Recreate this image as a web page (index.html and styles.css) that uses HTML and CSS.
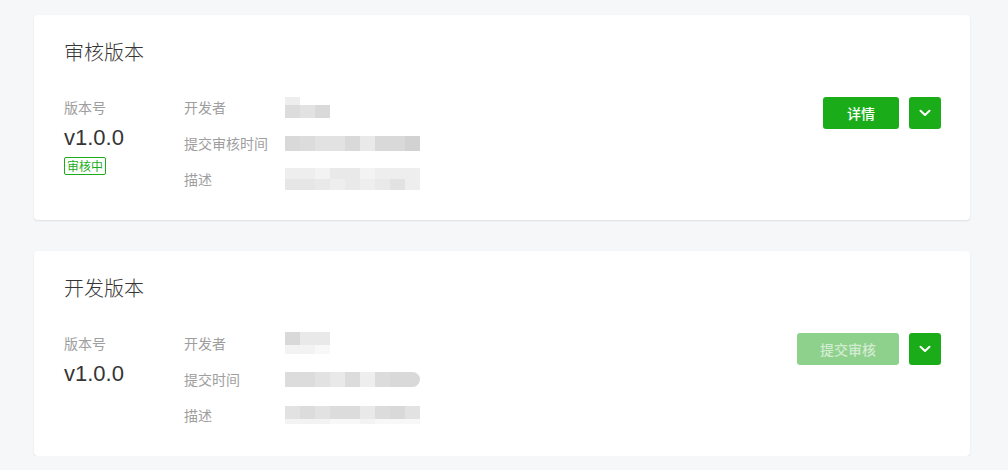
FILE: index.html
```html
<!DOCTYPE html>
<html lang="zh-CN">
<head>
<meta charset="utf-8">
<title>版本管理</title>
<link rel="stylesheet" href="styles.css">
</head>
<body>
<main class="page">
  <section class="card">
    <h2 class="card-title">审核版本</h2>
    <div class="card-body">
      <div class="ver-col">
        <div class="label">版本号</div>
        <div class="ver">v1.0.0</div>
        <span class="tag">审核中</span>
      </div>
      <div class="info">
        <div class="row">
          <span class="label row-label">开发者</span>
          <div class="mosaic">
            <div class="mrow h8"><i class="s7"></i></div>
            <div class="mrow h13"><i class="s3"></i><i class="s4"></i><i class="s2"></i></div>
          </div>
        </div>
        <div class="row">
          <span class="label row-label">提交审核时间</span>
          <div class="mosaic">
            <div class="mrow h15"><i class="s2"></i><i class="s3"></i><i class="s4"></i><i class="s4"></i><i class="s2"></i><i class="s6"></i><i class="s2"></i><i class="s2"></i><i class="s1"></i></div>
          </div>
        </div>
        <div class="row">
          <span class="label row-label">描述</span>
          <div class="mosaic">
            <div class="mrow h11"><i class="s7"></i><i class="s7"></i><i class="s8"></i><i class="s6"></i><i class="s6"></i><i class="s8"></i><i class="s7"></i><i class="s7"></i><i class="s7"></i></div>
            <div class="mrow h11"><i class="s5"></i><i class="s5"></i><i class="s6"></i><i class="s7"></i><i class="s6"></i><i class="s7"></i><i class="s6"></i><i class="s4"></i><i class="s7"></i></div>
          </div>
        </div>
      </div>
      <div class="actions">
        <button class="btn btn-primary" type="button">详情</button>
        <button class="btn btn-icon" type="button" aria-label="更多">
          <svg width="12" height="8" viewBox="0 0 12 8"><path d="M1.5 1.8 6 6 10.5 1.8" fill="none" stroke="#fff" stroke-width="2" stroke-linecap="round" stroke-linejoin="round"/></svg>
        </button>
      </div>
    </div>
  </section>

  <section class="card">
    <h2 class="card-title">开发版本</h2>
    <div class="card-body">
      <div class="ver-col">
        <div class="label">版本号</div>
        <div class="ver">v1.0.0</div>
      </div>
      <div class="info">
        <div class="row">
          <span class="label row-label">开发者</span>
          <div class="mosaic">
            <div class="mrow h13"><i class="s2"></i><i class="s6"></i><i class="s6"></i></div>
            <div class="mrow h9"><i class="s8"></i><i class="s8"></i><i class="s9"></i></div>
          </div>
        </div>
        <div class="row">
          <span class="label row-label">提交时间</span>
          <div class="mosaic round-r">
            <div class="mrow h15"><i class="s3"></i><i class="s3"></i><i class="s4"></i><i class="s6"></i><i class="s3"></i><i class="s7"></i><i class="s3"></i><i class="s2"></i><i class="s2"></i></div>
          </div>
        </div>
        <div class="row">
          <span class="label row-label">描述</span>
          <div class="mosaic">
            <div class="mrow h13"><i class="s4"></i><i class="s3"></i><i class="s4"></i><i class="s3"></i><i class="s3"></i><i class="s6"></i><i class="s3"></i><i class="s2"></i><i class="s4"></i></div>
            <div class="mrow h5"><i class="s8"></i><i class="s8"></i><i class="s8"></i><i class="s9"></i><i class="s9"></i><i class="s8"></i><i class="s9"></i><i class="s9"></i><i class="s9"></i></div>
          </div>
        </div>
      </div>
      <div class="actions">
        <button class="btn btn-primary btn-disabled" type="button" disabled>提交审核</button>
        <button class="btn btn-icon" type="button" aria-label="更多">
          <svg width="12" height="8" viewBox="0 0 12 8"><path d="M1.5 1.8 6 6 10.5 1.8" fill="none" stroke="#fff" stroke-width="2" stroke-linecap="round" stroke-linejoin="round"/></svg>
        </button>
      </div>
    </div>
  </section>
</main>
</body>
</html>
```

FILE: styles.css
```css
* { box-sizing: border-box; }

html, body {
  margin: 0;
  padding: 0;
  background: #f6f7f9;
}

body {
  font-family: "Liberation Sans", "Noto Sans CJK SC", sans-serif;
  color: #353535;
}

.page {
  display: flex;
  flex-direction: column;
  gap: 31px;
  padding: 15px 38px 0 34px;
}

.card {
  background: #fff;
  border-radius: 4px;
  box-shadow: 0 1px 2px rgba(0, 0, 0, 0.1);
  padding: 23px 29px 23px 30px;
}

.card-title {
  margin: 0 0 23px;
  font-size: 20px;
  line-height: 28px;
  font-weight: 300;
  color: #353535;
  font-family: "Noto Sans CJK SC", sans-serif;
}

.card-body {
  display: flex;
  align-items: flex-start;
}

.label {
  font-family: "Noto Sans CJK SC", sans-serif;
  font-size: 14px;
  font-weight: 400;
  color: #9e9e9e;
  line-height: 36px;
}

.ver-col {
  width: 120px;
  flex: none;
  display: flex;
  flex-direction: column;
  align-items: flex-start;
}

.ver {
  font-size: 22px;
  line-height: 26px;
  color: #353535;
}

.tag {
  margin-top: 6px;
  border: 1px solid #1aad19;
  border-radius: 2px;
  color: #1aad19;
  font-family: "Noto Sans CJK SC", sans-serif;
  font-size: 12px;
  line-height: 16px;
  padding: 0 2px;
}

.info {
  flex: 1;
  display: flex;
  flex-direction: column;
}

.row {
  display: flex;
  align-items: center;
  height: 36px;
}

.row-label {
  width: 101px;
  flex: none;
}

.mosaic {
  display: flex;
  flex-direction: column;
  filter: blur(0.4px);
}

.mosaic.round-r {
  border-radius: 0 8px 8px 0;
  overflow: hidden;
}

.mrow {
  display: flex;
}

.mrow i {
  display: block;
  width: 15px;
  height: 100%;
}

.h5 { height: 5px; }
.h8 { height: 8px; }
.h9 { height: 9px; }
.h11 { height: 11px; }
.h13 { height: 13px; }
.h15 { height: 15px; }

.s1 { background: #d2d2d2; }
.s2 { background: #d9d9d9; }
.s3 { background: #dcdcdc; }
.s4 { background: #e2e2e2; }
.s5 { background: #e6e6e6; }
.s6 { background: #e9e9e9; }
.s7 { background: #eeeeee; }
.s8 { background: #f3f3f3; }
.s9 { background: #f8f8f8; }

.actions {
  margin-top: 8px;
  display: flex;
  gap: 10px;
  flex: none;
}

.btn {
  height: 32px;
  border: 0;
  border-radius: 3px;
  background: #1aad19;
  color: #fff;
  font-family: "Noto Sans CJK SC", sans-serif;
  font-size: 14px;
  font-weight: 500;
  padding: 0;
  cursor: pointer;
}

.btn-primary {
  width: 76px;
}

.btn-disabled {
  width: 102px;
  background: #8ed18c;
  color: rgba(255, 255, 255, 0.6);
  cursor: default;
}

.btn-icon {
  width: 32px;
  display: flex;
  align-items: center;
  justify-content: center;
}
```
